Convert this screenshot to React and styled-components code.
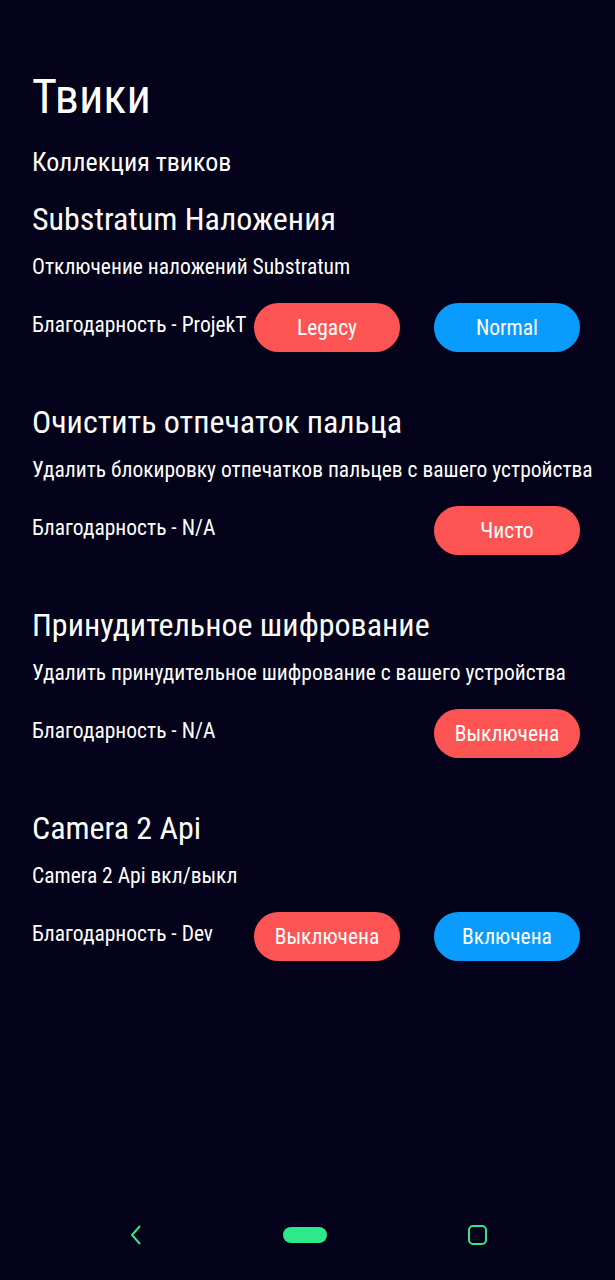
import React from 'react';
import styled, { createGlobalStyle } from 'styled-components';

const GlobalStyle = createGlobalStyle`
  html, body {
    margin: 0;
    padding: 0;
    background: #03021a;
  }
  body {
    font-family: "Roboto Condensed", Roboto, "Liberation Sans", sans-serif;
    color: #ffffff;
  }
`;

const Screen = styled.div`
  min-height: 100vh;
  display: flex;
  flex-direction: column;
  background: #03021a;
`;

const Content = styled.main`
  flex: 1;
  padding: 69px 35px 0 32px;
`;

const Title = styled.h1`
  margin: 0;
  font-size: 48px;
  line-height: 56px;
  font-weight: 400;
`;

const Subtitle = styled.p`
  margin: 21px 0 22px;
  font-size: 26px;
  line-height: 32px;
`;

const Section = styled.section`
  margin-bottom: 51px;
`;

const SectionTitle = styled.h2`
  margin: 0;
  font-size: 32px;
  line-height: 38px;
  font-weight: 400;
`;

const Description = styled.p`
  margin: 16px 0 23px;
  font-size: 21.5px;
  line-height: 26px;
  white-space: nowrap;
`;

const Row = styled.div`
  display: grid;
  grid-template-columns: 1fr 146px 34px 146px;
  align-items: start;
`;

const Credit = styled.span`
  padding-top: 9px;
  font-size: 21.5px;
  line-height: 26px;
  white-space: nowrap;
`;

const Pill = styled.button`
  grid-column: ${(p) => p.$col};
  height: 49px;
  border: none;
  border-radius: 25px;
  background: ${(p) => (p.$tone === 'blue' ? '#0a9bff' : '#ff5454')};
  color: #ffffff;
  font-family: inherit;
  font-size: 21.5px;
  padding: 0;
`;

const NavBar = styled.nav`
  height: 90px;
  display: flex;
  align-items: center;
  justify-content: space-between;
  padding: 0 126px 0 129px;
`;

const HomePill = styled.div`
  width: 44px;
  height: 16px;
  border-radius: 8px;
  background: #2ee88a;
`;

const tweaks = [
  {
    title: 'Substratum Наложения',
    desc: 'Отключение наложений Substratum',
    credit: 'Благодарность - ProjekT',
    buttons: [
      { label: 'Legacy', tone: 'red' },
      { label: 'Normal', tone: 'blue' },
    ],
  },
  {
    title: 'Очистить отпечаток пальца',
    desc: 'Удалить блокировку отпечатков пальцев с вашего устройства',
    credit: 'Благодарность - N/A',
    buttons: [{ label: 'Чисто', tone: 'red' }],
  },
  {
    title: 'Принудительное шифрование',
    desc: 'Удалить принудительное шифрование с вашего устройства',
    credit: 'Благодарность - N/A',
    buttons: [{ label: 'Выключена', tone: 'red' }],
  },
  {
    title: 'Camera 2 Api',
    desc: 'Camera 2 Api вкл/выкл',
    credit: 'Благодарность - Dev',
    buttons: [
      { label: 'Выключена', tone: 'red' },
      { label: 'Включена', tone: 'blue' },
    ],
  },
];

function Tweak({ tweak }) {
  const single = tweak.buttons.length === 1;
  return (
    <Section>
      <SectionTitle>{tweak.title}</SectionTitle>
      <Description>{tweak.desc}</Description>
      <Row>
        <Credit>{tweak.credit}</Credit>
        {tweak.buttons.map((b, i) => (
          <Pill key={b.label} $tone={b.tone} $col={single || i === 1 ? 4 : 2}>
            {b.label}
          </Pill>
        ))}
      </Row>
    </Section>
  );
}

export default function App() {
  return (
    <Screen>
      <GlobalStyle />
      <Content>
        <Title>Твики</Title>
        <Subtitle>Коллекция твиков</Subtitle>
        {tweaks.map((t) => (
          <Tweak key={t.title} tweak={t} />
        ))}
      </Content>
      <NavBar>
        <svg width="14" height="22" viewBox="0 0 14 22">
          <path d="M11 2 L3 11 L11 20" fill="none" stroke="#2ee88a" strokeWidth="2" />
        </svg>
        <HomePill />
        <svg width="22" height="22" viewBox="0 0 22 22">
          <rect x="2" y="2" width="17" height="18" rx="4" fill="none" stroke="#2ee88a" strokeWidth="2" />
        </svg>
      </NavBar>
    </Screen>
  );
}
